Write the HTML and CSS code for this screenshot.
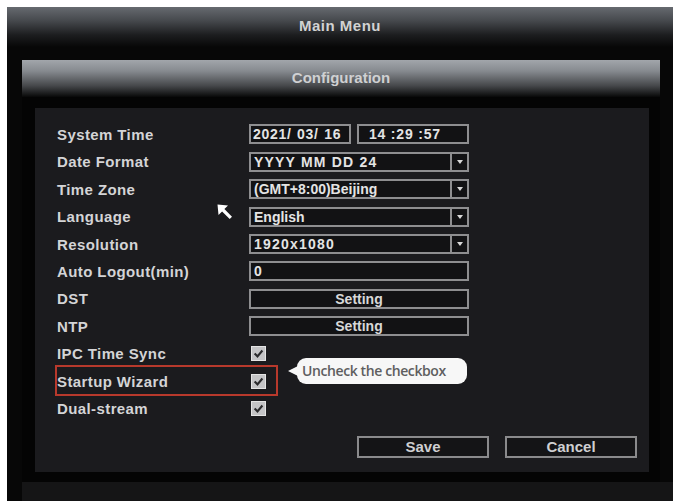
FILE: index.html
```html
<!DOCTYPE html>
<html lang="en">
<head>
    <meta charset="UTF-8">
    <meta name="viewport" content="width=device-width, initial-scale=1.0">
    <title>Configuration</title>
    <link rel="stylesheet" href="styles.css">
</head>
<body>
    <div class="screen">
        <div class="main-title">Main Menu</div>

        <div class="main-body">
            <div class="panel">
                <div class="panel-title">Configuration</div>
                <div class="panel-body">
                    <div class="content">
                        <div class="rows">
                            <div class="row">
                                <span class="label">System Time</span>
                                <div class="pair">
                                    <span class="box date">2021/ 03/ 16</span>
                                    <span class="box time">14 :29 :57</span>
                                </div>
                            </div>
                            <div class="row">
                                <span class="label">Date Format</span>
                                <div class="box select"><span class="num">YYYY MM DD 24</span><span class="arrow"></span></div>
                            </div>
                            <div class="row">
                                <span class="label">Time Zone</span>
                                <div class="box select"><span>(GMT+8:00)Beijing</span><span class="arrow"></span></div>
                            </div>
                            <div class="row">
                                <span class="label">Language</span>
                                <div class="box select"><span>English</span><span class="arrow"></span></div>
                            </div>
                            <div class="row">
                                <span class="label">Resolution</span>
                                <div class="box select"><span class="num">1920x1080</span><span class="arrow"></span></div>
                            </div>
                            <div class="row">
                                <span class="label">Auto Logout(min)</span>
                                <div class="box">0</div>
                            </div>
                            <div class="row">
                                <span class="label">DST</span>
                                <div class="box btn">Setting</div>
                            </div>
                            <div class="row">
                                <span class="label">NTP</span>
                                <div class="box btn">Setting</div>
                            </div>
                            <div class="row">
                                <span class="label">IPC Time Sync</span>
                                <span class="check"><svg viewBox="0 0 15 15"><path d="M3 7.5 L6.3 10.8 L12 4" /></svg></span>
                            </div>
                            <div class="row marked">
                                <span class="label">Startup Wizard</span>
                                <span class="check"><svg viewBox="0 0 15 15"><path d="M3 7.5 L6.3 10.8 L12 4" /></svg></span>
                                <div class="highlight"></div>
                                <div class="tip">Uncheck the checkbox</div>
                            </div>
                            <div class="row">
                                <span class="label">Dual-stream</span>
                                <span class="check"><svg viewBox="0 0 15 15"><path d="M3 7.5 L6.3 10.8 L12 4" /></svg></span>
                            </div>
                        </div>

                        <div class="actions">
                            <button class="action">Save</button>
                            <button class="action">Cancel</button>
                        </div>

                        <!-- mouse pointer -->
                        <svg class="cursor" viewBox="0 0 16 16">
                            <path d="M0.5 0.5 L11 1.5 L7.4 5.1 L15 12.7 L12.7 15 L5.1 7.4 L1.5 11 Z" />
                        </svg>
                    </div>
                </div>
            </div>
        </div>

        <div class="screen-foot"></div>
    </div>
</body>
</html>
```

FILE: styles.css
```css
body {
    margin: 0;
    padding: 7px 6px 0 7px;
    background-color: #ffffff;
    font-family: "Liberation Sans", Arial, sans-serif;
    height: 501px;
    box-sizing: border-box;
    overflow: hidden;
}

/* Outer DVR window */
.screen {
    width: 666px;
    height: 494px;
    background: #070707;
    display: flex;
    flex-direction: column;
}

.main-title {
    height: 40px;
    line-height: 38px;
    text-align: center;
    font-size: 15px;
    font-weight: bold;
    letter-spacing: 0.5px;
    color: #d2d2d2;
    background: linear-gradient(#666a6f 0%, #45484c 35%, #1c1d1f 70%, #070707 100%);
}

.main-body {
    padding: 13px 13px 0 15px;
}

/* Configuration panel */
.panel {
    background: #040404;
}

.panel-title {
    height: 37px;
    line-height: 36px;
    text-align: center;
    font-size: 15px;
    font-weight: bold;
    color: #cfd0d2;
    background: linear-gradient(#a2a6ab 0%, #868a8f 30%, #45474a 70%, #080808 100%);
}

.panel-body {
    padding: 11px 11px 10px 13px;
}

.content {
    position: relative;
    height: 364px;
    box-sizing: border-box;
    padding: 12.8px 12px 0 22px;
    background: #1b1b1e;
}

.row {
    position: relative;
    display: grid;
    grid-template-columns: 192px 220px;
    align-items: center;
    height: 27.4px;
}

.label {
    font-size: 15px;
    font-weight: bold;
    letter-spacing: 0.4px;
    color: #d4d4d6;
    white-space: nowrap;
}

.box {
    display: flex;
    align-items: center;
    height: 20px;
    box-sizing: border-box;
    padding: 0 3px;
    border: 2px solid #8e8e90;
    background: #121214;
    color: #e4e4e4;
    font-size: 14px;
    font-weight: bold;
    white-space: pre;
    overflow: hidden;
}

.pair {
    display: flex;
    gap: 6px;
}

.date {
    width: 102px;
    padding: 0 2px;
    letter-spacing: 0.7px;
    word-spacing: 1px;
}

.time {
    width: 112px;
    letter-spacing: 0.8px;
    padding-left: 10px;
}

.num {
    letter-spacing: 1.2px;
}

.select {
    justify-content: space-between;
    padding-right: 0;
}

.arrow {
    align-self: stretch;
    width: 15px;
    border-left: 2px solid #8e8e90;
    position: relative;
}

.arrow::after {
    content: "";
    position: absolute;
    left: 5px;
    top: 6px;
    border-left: 3px solid transparent;
    border-right: 3px solid transparent;
    border-top: 4px solid #d8d8d8;
}

.btn {
    justify-content: center;
    color: #d8d8d8;
}

.check {
    width: 15px;
    height: 15px;
    margin-left: 2px;
    box-sizing: border-box;
    border: 1px solid #e4e4e4;
    background: #c4c4c6;
}

.check svg {
    display: block;
    width: 13px;
    height: 13px;
    fill: none;
    stroke: #2a2a2c;
    stroke-width: 2.4;
}

/* annotation overlays */
.highlight {
    position: absolute;
    left: -2px;
    top: -2.4px;
    width: 223px;
    height: 31px;
    box-sizing: border-box;
    border: 2px solid #b8392c;
}

.tip {
    position: absolute;
    left: 240px;
    top: -9.4px;
    width: 170px;
    height: 26px;
    box-sizing: border-box;
    padding-left: 5px;
    line-height: 26px;
    border-radius: 9px;
    background: #f7f7f7;
    color: #5e5e60;
    font-family: "Open Sans", "Noto Sans", sans-serif;
    font-size: 14px;
    font-weight: 600;
    letter-spacing: -0.4px;
    white-space: nowrap;
}

.tip::before {
    content: "";
    position: absolute;
    left: -9px;
    top: 8px;
    border-top: 5px solid transparent;
    border-bottom: 5px solid transparent;
    border-right: 10px solid #f7f7f7;
}

.actions {
    display: flex;
    justify-content: flex-end;
    gap: 16px;
    margin-top: 13.8px;
}

.action {
    width: 132px;
    height: 22px;
    padding: 0;
    border: 2px solid #8a8a8c;
    background: #141416;
    color: #cfcfd1;
    font-family: "Liberation Sans", Arial, sans-serif;
    font-size: 15px;
    font-weight: bold;
}

.cursor {
    position: absolute;
    left: 182px;
    top: 96px;
    width: 16px;
    height: 16px;
    fill: #ffffff;
}

.screen-foot {
    flex: 1;
    margin-left: 15px;
    background: #151516;
}
```
